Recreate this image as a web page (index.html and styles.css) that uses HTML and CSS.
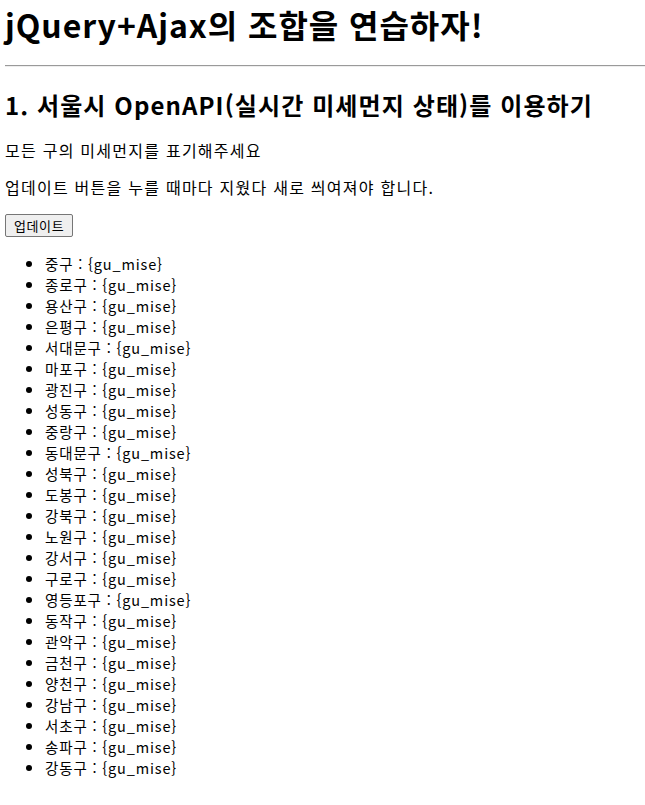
FILE: index.html
```html
<!DOCTYPE html>
<html lang="ko">
<head>
<meta charset="utf-8">
<title>jQuery+Ajax의 조합을 연습하자!</title>
<link rel="stylesheet" href="styles.css">
</head>
<body>
<h1 class="title">jQuery+Ajax의 조합을 연습하자!</h1>
<hr class="rule">
<h2 class="subtitle">1. 서울시 OpenAPI(실시간 미세먼지 상태)를 이용하기</h2>
<p class="desc">모든 구의 미세먼지를 표기해주세요</p>
<p class="desc">업데이트 버튼을 누를 때마다 지웠다 새로 씌여져야 합니다.</p>
<button class="btn">업데이트</button>
<ul class="gu-list">
<li>중구 : {gu_mise}</li>
<li>종로구 : {gu_mise}</li>
<li>용산구 : {gu_mise}</li>
<li>은평구 : {gu_mise}</li>
<li>서대문구 : {gu_mise}</li>
<li>마포구 : {gu_mise}</li>
<li>광진구 : {gu_mise}</li>
<li>성동구 : {gu_mise}</li>
<li>중랑구 : {gu_mise}</li>
<li>동대문구 : {gu_mise}</li>
<li>성북구 : {gu_mise}</li>
<li>도봉구 : {gu_mise}</li>
<li>강북구 : {gu_mise}</li>
<li>노원구 : {gu_mise}</li>
<li>강서구 : {gu_mise}</li>
<li>구로구 : {gu_mise}</li>
<li>영등포구 : {gu_mise}</li>
<li>동작구 : {gu_mise}</li>
<li>관악구 : {gu_mise}</li>
<li>금천구 : {gu_mise}</li>
<li>양천구 : {gu_mise}</li>
<li>강남구 : {gu_mise}</li>
<li>서초구 : {gu_mise}</li>
<li>송파구 : {gu_mise}</li>
<li>강동구 : {gu_mise}</li>
</ul>
</body>
</html>
```
FILE: styles.css
```css
html, body {
  overflow: hidden;
}
body {
  margin: 0;
  padding: 0 0 0 5px;
  font-family: "Noto Sans CJK KR", "Noto Sans", sans-serif;
  font-size: 16px;
  color: #000;
  background: #fff;
}
.title {
  margin: 3px 0 0;
  font-size: 32px;
  line-height: 42px;
  font-weight: 700;
  letter-spacing: 0.95px;
  white-space: nowrap;
}
.rule {
  margin: 20px 0 0;
  border: 0;
  border-top: 1px solid #9a9a9a;
  border-bottom: 1px solid #eeeeee;
  height: 0;
}
.subtitle {
  margin: 22px 0 0;
  font-size: 24px;
  line-height: 32px;
  font-weight: 700;
  letter-spacing: 1.1px;
  white-space: nowrap;
}
.desc {
  margin: 19px 0 0;
  line-height: 21px;
  letter-spacing: 1.25px;
}
.desc + .desc {
  margin-top: 16px;
}
.btn {
  display: block;
  margin: 16px 0 0;
  height: 23px;
  padding: 0 8px;
  font-family: "Noto Sans CJK KR", sans-serif;
  font-size: 13px;
  line-height: 19px;
  letter-spacing: 0.6px;
  color: #000;
  background: #efefef;
  border: 1px solid #767676;
  border-radius: 2px;
}
.gu-list {
  margin: 16px 0 0;
  padding-left: 40px;
  font-size: 14.5px;
  line-height: 21px;
  letter-spacing: 0.85px;
}
.gu-list li {
  height: 21px;
}
.gu-list li::marker {
  font-size: 16px;
}
```
